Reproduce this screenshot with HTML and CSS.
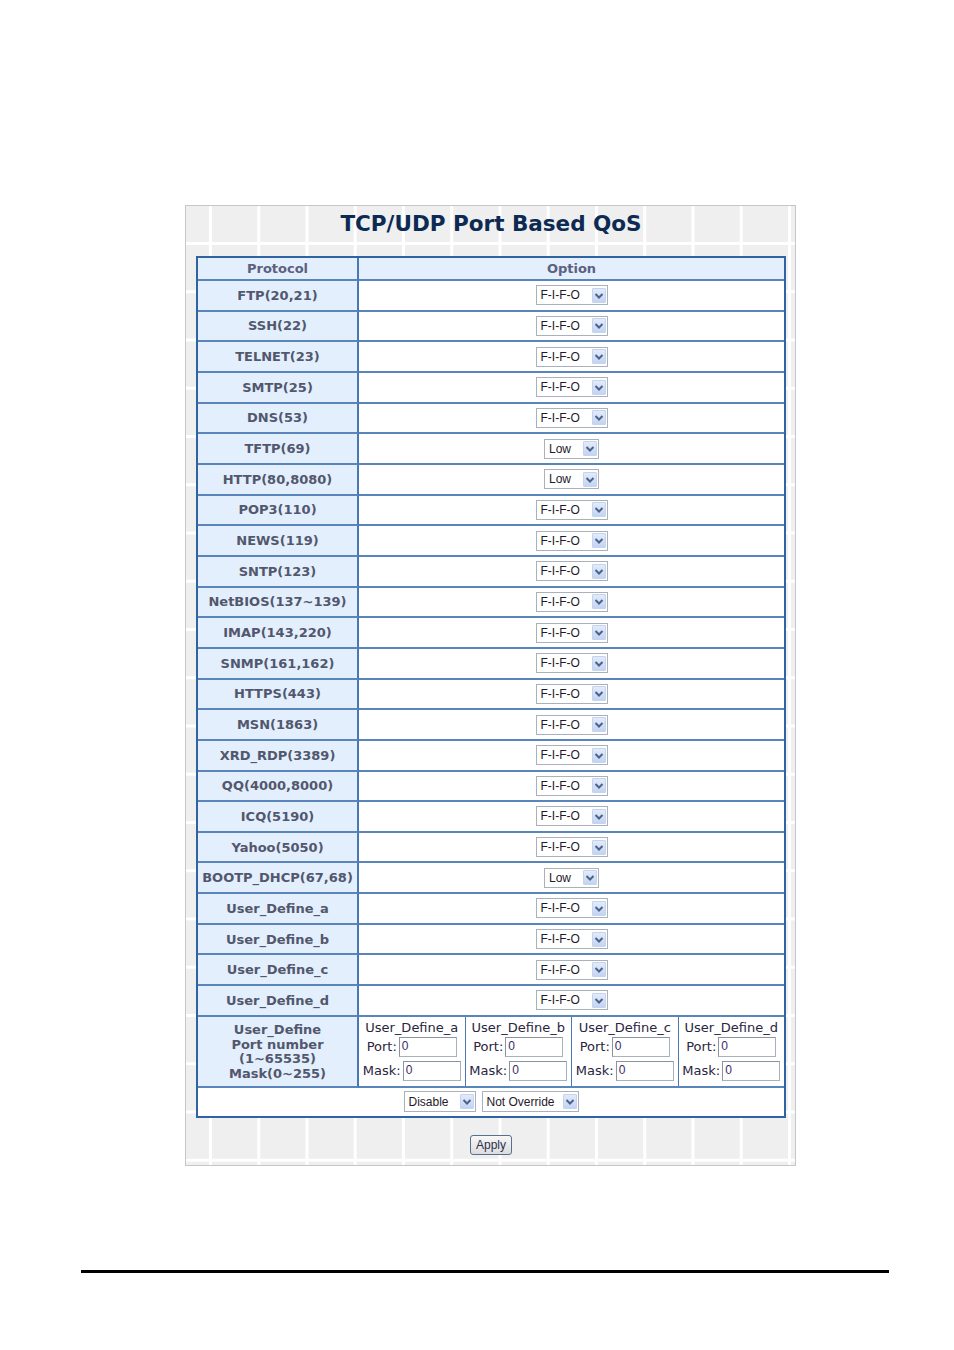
FILE: index.html
```html
<!DOCTYPE html>
<html>
<head>
<meta charset="utf-8">
<link rel="stylesheet" href="styles.css">
</head>
<body>
<div class="page">
  <div class="panel">
    <div class="title">TCP/UDP Port Based QoS</div>
    <div class="qos">
      <div class="c hd lc">Protocol</div>
      <div class="c hd rc">Option</div>

      <div class="c lc r">FTP(20,21)</div><div class="c rc r"><span class="sel w-fifo"><span class="tx">F-I-F-O</span><span class="ar"><svg viewBox="0 0 14 15" width="14" height="15"><path d="M3.5 6 L7 9.5 L10.5 6" fill="none" stroke="#4e6288" stroke-width="2"/></svg></span></span></div>
      <div class="c lc r">SSH(22)</div><div class="c rc r"><span class="sel w-fifo"><span class="tx">F-I-F-O</span><span class="ar"><svg viewBox="0 0 14 15" width="14" height="15"><path d="M3.5 6 L7 9.5 L10.5 6" fill="none" stroke="#4e6288" stroke-width="2"/></svg></span></span></div>
      <div class="c lc r">TELNET(23)</div><div class="c rc r"><span class="sel w-fifo"><span class="tx">F-I-F-O</span><span class="ar"><svg viewBox="0 0 14 15" width="14" height="15"><path d="M3.5 6 L7 9.5 L10.5 6" fill="none" stroke="#4e6288" stroke-width="2"/></svg></span></span></div>
      <div class="c lc r">SMTP(25)</div><div class="c rc r"><span class="sel w-fifo"><span class="tx">F-I-F-O</span><span class="ar"><svg viewBox="0 0 14 15" width="14" height="15"><path d="M3.5 6 L7 9.5 L10.5 6" fill="none" stroke="#4e6288" stroke-width="2"/></svg></span></span></div>
      <div class="c lc r">DNS(53)</div><div class="c rc r"><span class="sel w-fifo"><span class="tx">F-I-F-O</span><span class="ar"><svg viewBox="0 0 14 15" width="14" height="15"><path d="M3.5 6 L7 9.5 L10.5 6" fill="none" stroke="#4e6288" stroke-width="2"/></svg></span></span></div>
      <div class="c lc r">TFTP(69)</div><div class="c rc r"><span class="sel w-low"><span class="tx">Low</span><span class="ar"><svg viewBox="0 0 14 15" width="14" height="15"><path d="M3.5 6 L7 9.5 L10.5 6" fill="none" stroke="#4e6288" stroke-width="2"/></svg></span></span></div>
      <div class="c lc r">HTTP(80,8080)</div><div class="c rc r"><span class="sel w-low"><span class="tx">Low</span><span class="ar"><svg viewBox="0 0 14 15" width="14" height="15"><path d="M3.5 6 L7 9.5 L10.5 6" fill="none" stroke="#4e6288" stroke-width="2"/></svg></span></span></div>
      <div class="c lc r">POP3(110)</div><div class="c rc r"><span class="sel w-fifo"><span class="tx">F-I-F-O</span><span class="ar"><svg viewBox="0 0 14 15" width="14" height="15"><path d="M3.5 6 L7 9.5 L10.5 6" fill="none" stroke="#4e6288" stroke-width="2"/></svg></span></span></div>
      <div class="c lc r">NEWS(119)</div><div class="c rc r"><span class="sel w-fifo"><span class="tx">F-I-F-O</span><span class="ar"><svg viewBox="0 0 14 15" width="14" height="15"><path d="M3.5 6 L7 9.5 L10.5 6" fill="none" stroke="#4e6288" stroke-width="2"/></svg></span></span></div>
      <div class="c lc r">SNTP(123)</div><div class="c rc r"><span class="sel w-fifo"><span class="tx">F-I-F-O</span><span class="ar"><svg viewBox="0 0 14 15" width="14" height="15"><path d="M3.5 6 L7 9.5 L10.5 6" fill="none" stroke="#4e6288" stroke-width="2"/></svg></span></span></div>
      <div class="c lc r">NetBIOS(137~139)</div><div class="c rc r"><span class="sel w-fifo"><span class="tx">F-I-F-O</span><span class="ar"><svg viewBox="0 0 14 15" width="14" height="15"><path d="M3.5 6 L7 9.5 L10.5 6" fill="none" stroke="#4e6288" stroke-width="2"/></svg></span></span></div>
      <div class="c lc r">IMAP(143,220)</div><div class="c rc r"><span class="sel w-fifo"><span class="tx">F-I-F-O</span><span class="ar"><svg viewBox="0 0 14 15" width="14" height="15"><path d="M3.5 6 L7 9.5 L10.5 6" fill="none" stroke="#4e6288" stroke-width="2"/></svg></span></span></div>
      <div class="c lc r">SNMP(161,162)</div><div class="c rc r"><span class="sel w-fifo"><span class="tx">F-I-F-O</span><span class="ar"><svg viewBox="0 0 14 15" width="14" height="15"><path d="M3.5 6 L7 9.5 L10.5 6" fill="none" stroke="#4e6288" stroke-width="2"/></svg></span></span></div>
      <div class="c lc r">HTTPS(443)</div><div class="c rc r"><span class="sel w-fifo"><span class="tx">F-I-F-O</span><span class="ar"><svg viewBox="0 0 14 15" width="14" height="15"><path d="M3.5 6 L7 9.5 L10.5 6" fill="none" stroke="#4e6288" stroke-width="2"/></svg></span></span></div>
      <div class="c lc r">MSN(1863)</div><div class="c rc r"><span class="sel w-fifo"><span class="tx">F-I-F-O</span><span class="ar"><svg viewBox="0 0 14 15" width="14" height="15"><path d="M3.5 6 L7 9.5 L10.5 6" fill="none" stroke="#4e6288" stroke-width="2"/></svg></span></span></div>
      <div class="c lc r">XRD_RDP(3389)</div><div class="c rc r"><span class="sel w-fifo"><span class="tx">F-I-F-O</span><span class="ar"><svg viewBox="0 0 14 15" width="14" height="15"><path d="M3.5 6 L7 9.5 L10.5 6" fill="none" stroke="#4e6288" stroke-width="2"/></svg></span></span></div>
      <div class="c lc r">QQ(4000,8000)</div><div class="c rc r"><span class="sel w-fifo"><span class="tx">F-I-F-O</span><span class="ar"><svg viewBox="0 0 14 15" width="14" height="15"><path d="M3.5 6 L7 9.5 L10.5 6" fill="none" stroke="#4e6288" stroke-width="2"/></svg></span></span></div>
      <div class="c lc r">ICQ(5190)</div><div class="c rc r"><span class="sel w-fifo"><span class="tx">F-I-F-O</span><span class="ar"><svg viewBox="0 0 14 15" width="14" height="15"><path d="M3.5 6 L7 9.5 L10.5 6" fill="none" stroke="#4e6288" stroke-width="2"/></svg></span></span></div>
      <div class="c lc r">Yahoo(5050)</div><div class="c rc r"><span class="sel w-fifo"><span class="tx">F-I-F-O</span><span class="ar"><svg viewBox="0 0 14 15" width="14" height="15"><path d="M3.5 6 L7 9.5 L10.5 6" fill="none" stroke="#4e6288" stroke-width="2"/></svg></span></span></div>
      <div class="c lc r">BOOTP_DHCP(67,68)</div><div class="c rc r"><span class="sel w-low"><span class="tx">Low</span><span class="ar"><svg viewBox="0 0 14 15" width="14" height="15"><path d="M3.5 6 L7 9.5 L10.5 6" fill="none" stroke="#4e6288" stroke-width="2"/></svg></span></span></div>
      <div class="c lc r">User_Define_a</div><div class="c rc r"><span class="sel w-fifo"><span class="tx">F-I-F-O</span><span class="ar"><svg viewBox="0 0 14 15" width="14" height="15"><path d="M3.5 6 L7 9.5 L10.5 6" fill="none" stroke="#4e6288" stroke-width="2"/></svg></span></span></div>
      <div class="c lc r">User_Define_b</div><div class="c rc r"><span class="sel w-fifo"><span class="tx">F-I-F-O</span><span class="ar"><svg viewBox="0 0 14 15" width="14" height="15"><path d="M3.5 6 L7 9.5 L10.5 6" fill="none" stroke="#4e6288" stroke-width="2"/></svg></span></span></div>
      <div class="c lc r">User_Define_c</div><div class="c rc r"><span class="sel w-fifo"><span class="tx">F-I-F-O</span><span class="ar"><svg viewBox="0 0 14 15" width="14" height="15"><path d="M3.5 6 L7 9.5 L10.5 6" fill="none" stroke="#4e6288" stroke-width="2"/></svg></span></span></div>
      <div class="c lc r">User_Define_d</div><div class="c rc r"><span class="sel w-fifo"><span class="tx">F-I-F-O</span><span class="ar"><svg viewBox="0 0 14 15" width="14" height="15"><path d="M3.5 6 L7 9.5 L10.5 6" fill="none" stroke="#4e6288" stroke-width="2"/></svg></span></span></div>

      <div class="c lc ud-l">User_Define<br>Port number<br>(1~65535)<br>Mask(0~255)</div>
      <div class="c rc ud-r">
        <div class="ud">
          <div class="ud-name">User_Define_a</div>
          <div class="ud-row"><span>Port:</span><span class="inp">0</span></div>
          <div class="ud-row"><span>Mask:</span><span class="inp">0</span></div>
        </div>
        <div class="ud">
          <div class="ud-name">User_Define_b</div>
          <div class="ud-row"><span>Port:</span><span class="inp">0</span></div>
          <div class="ud-row"><span>Mask:</span><span class="inp">0</span></div>
        </div>
        <div class="ud">
          <div class="ud-name">User_Define_c</div>
          <div class="ud-row"><span>Port:</span><span class="inp">0</span></div>
          <div class="ud-row"><span>Mask:</span><span class="inp">0</span></div>
        </div>
        <div class="ud">
          <div class="ud-name">User_Define_d</div>
          <div class="ud-row"><span>Port:</span><span class="inp">0</span></div>
          <div class="ud-row"><span>Mask:</span><span class="inp">0</span></div>
        </div>
      </div>

      <div class="c last">
        <span class="sel w-dis"><span class="tx">Disable</span><span class="ar"><svg viewBox="0 0 14 15" width="14" height="15"><path d="M3.5 6 L7 9.5 L10.5 6" fill="none" stroke="#4e6288" stroke-width="2"/></svg></span></span>
        <span class="sel w-nov"><span class="tx">Not Override</span><span class="ar"><svg viewBox="0 0 14 15" width="14" height="15"><path d="M3.5 6 L7 9.5 L10.5 6" fill="none" stroke="#4e6288" stroke-width="2"/></svg></span></span>
      </div>
    </div>
    <div class="apply-area"><span class="btn">Apply</span></div>
  </div>
  <div class="rule"></div>
</div>
</body>
</html>
```

FILE: styles.css
```css
html, body {
  margin: 0;
  padding: 0;
  background: #fff;
}
.page {
  padding-top: 205px;
  font-family: "DejaVu Sans", Verdana, sans-serif;
}
.panel {
  margin-left: 185px;
  width: 611px;
  height: 961px;
  box-sizing: border-box;
  border: 1px solid #c6c6c6;
  padding: 0 9px 0 10px;
  background-color: #efefef;
  background-image:
    linear-gradient(to right, #ffffff 3px, transparent 3px),
    linear-gradient(to bottom, #ffffff 3px, transparent 3px);
  background-size: 48.25px 48.25px;
  background-position: 23px 36px;
}
.title {
  height: 50px;
  box-sizing: border-box;
  padding-top: 3px;
  line-height: 30px;
  font-size: 21.5px;
  font-weight: bold;
  color: #0c2a52;
  text-align: center;
}
.qos {
  display: grid;
  grid-template-columns: 161px 1fr;
  border: 2px solid #2f63a2;
  background: #fff;
}
.c {
  box-sizing: border-box;
  border-bottom: 2px solid #5a85bb;
  display: flex;
  align-items: center;
  justify-content: center;
}
.lc {
  background: #e3effc;
  border-right: 2px solid #4a78b2;
  font-size: 13px;
  font-weight: bold;
  color: #52576e;
}
.rc {
  background: #fff;
}
.hd {
  height: 23px;
  background: #e3effc;
  font-size: 13px;
  font-weight: bold;
  color: #5c6180;
}
.r {
  height: 30.667px;
}
.sel {
  display: inline-flex;
  align-items: center;
  height: 20px;
  box-sizing: border-box;
  border: 1px solid #a9b1bd;
  background: #fff;
  padding: 0 1px 0 4px;
  font-family: "Liberation Sans", Arial, sans-serif;
  font-size: 12px;
  color: #1e1a2a;
}
.sel .tx {
  flex: 1;
  white-space: nowrap;
}
.sel .ar {
  width: 14px;
  height: 15px;
  box-sizing: border-box;
  background: linear-gradient(#e2ebfb, #c3d4f2);
  border: 1px solid #c4d3ee;
  border-radius: 1px;
  display: flex;
}
.sel .ar svg {
  display: block;
  margin: -1px;
}
.w-fifo { width: 72px; }
.w-low { width: 55px; }
.w-dis { width: 72px; height: 21px; }
.w-nov { width: 97px; height: 21px; }

.ud-l {
  height: 71px;
  line-height: 14.5px;
  text-align: center;
  padding-top: 2px;
}
.ud-r {
  height: 71px;
  align-items: stretch;
  justify-content: stretch;
}
.ud {
  flex: 1 1 0;
  display: flex;
  flex-direction: column;
  align-items: center;
  padding-top: 3px;
  border-left: 1px solid #4a78b2;
  font-size: 13px;
  color: #2a2540;
}
.ud:first-child {
  border-left: none;
}
.ud-name {
  height: 16px;
  line-height: 16px;
  margin-bottom: 1px;
  white-space: nowrap;
}
.ud-row {
  display: flex;
  align-items: center;
  gap: 2px;
  height: 20px;
  margin-bottom: 4px;
}
.inp {
  width: 58px;
  height: 20px;
  box-sizing: border-box;
  border: 1px solid #a9b1bd;
  border-top-color: #8a949f;
  border-left-color: #8a949f;
  background: #fff;
  font-family: "Liberation Sans", Arial, sans-serif;
  font-size: 12px;
  line-height: 16px;
  padding-left: 2px;
  color: #3a2a6a;
}
.last {
  grid-column: 1 / -1;
  height: 28px;
  border-bottom: none;
  gap: 6px;
  background: #fff;
}
.apply-area {
  height: 47px;
  box-sizing: border-box;
  padding-top: 17px;
  text-align: center;
}
.btn {
  display: inline-block;
  width: 42px;
  height: 20px;
  box-sizing: border-box;
  border: 1px solid #56708f;
  border-radius: 3px;
  background: linear-gradient(#f7f7f7, #dcdcdc);
  font-family: "Liberation Sans", Arial, sans-serif;
  font-size: 12px;
  line-height: 18px;
  color: #2b3050;
  text-align: center;
  vertical-align: top;
}
.rule {
  margin-top: 104px;
  margin-left: 81px;
  width: 808px;
  height: 3px;
  background: #000;
}
```
